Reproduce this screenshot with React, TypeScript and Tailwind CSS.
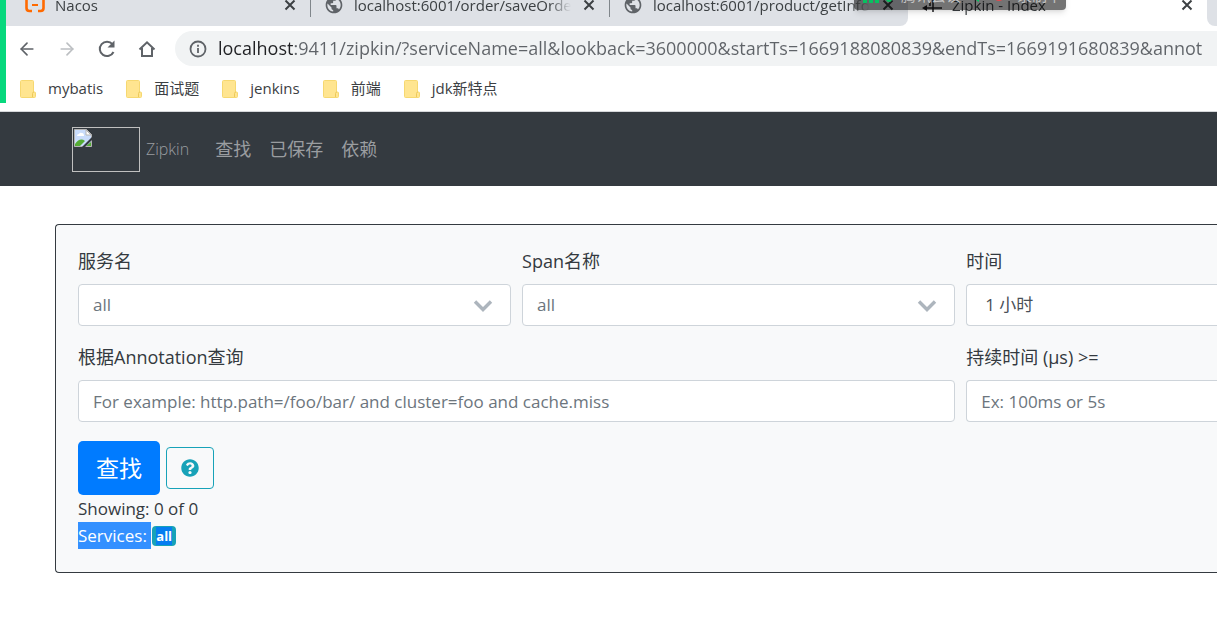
import React from 'react';
import { ArrowLeft, ArrowRight } from 'lucide-react';

interface TabProps {
  title: string;
  icon: React.ReactNode;
  className?: string;
}

const bookmarks = ['mybatis', '面试题', 'jenkins', '前端', 'jdk新特点'];

const navLinks = ['查找', '已保存', '依赖'];

const GlobeIcon = () => (
  <svg className="w-5 h-5 shrink-0" viewBox="0 0 24 24" fill="#5f6368">
    <path d="M12 2C6.48 2 2 6.48 2 12s4.48 10 10 10 10-4.48 10-10S17.52 2 12 2zm-1 17.93c-3.95-.49-7-3.85-7-7.93 0-.62.08-1.21.21-1.79L9 15v1c0 1.1.9 2 2 2v1.93zm6.9-2.54c-.26-.81-1-1.39-1.9-1.39h-1v-3c0-.55-.45-1-1-1H8v-2h2c.55 0 1-.45 1-1V7h2c1.1 0 2-.9 2-2v-.41c2.93 1.19 5 4.06 5 7.41 0 2.08-.8 3.97-2.1 5.39z" />
  </svg>
);

const NacosIcon = () => (
  <svg className="w-5 h-5 shrink-0" viewBox="0 0 20 20" fill="none" stroke="#ff6a00" strokeWidth="2.6">
    <path d="M7 2H4.500Q1.500 2 1.500 5v8q0 3 3 3H7M13 2h2.500q3 0 3 3v8q0 3-3 3H13" />
    <path d="M7 10h6" strokeWidth="2" />
  </svg>
);

const ZipkinIcon = () => (
  <svg className="w-5 h-5 shrink-0" viewBox="0 0 20 20" fill="none" stroke="#202124" strokeWidth="1.5">
    <path d="M11 1v16M4 13h16M8 7v4" />
    <path d="M0 13l5-3v6z" fill="#202124" stroke="none" />
  </svg>
);

const CloseIcon = () => (
  <svg className="w-3 h-3" viewBox="0 0 12 12" fill="none" stroke="#3c4043" strokeWidth="2">
    <path d="M1.500 1.500l9 9M10.500 1.500l-9 9" />
  </svg>
);

const ReloadIcon = () => (
  <svg className="w-5 h-5" viewBox="0 0 20 20" fill="none" stroke="#5f6368" strokeWidth="2">
    <path d="M15.500 5.200A7.200 7.200 0 1 0 16.500 13" />
    <path d="M17.500 1.500v7h-7z" fill="#5f6368" stroke="none" />
  </svg>
);

const HomeIcon = () => (
  <svg className="w-5 h-5" viewBox="0 0 20 20" fill="none" stroke="#5f6368" strokeWidth="2">
    <path d="M2.500 10.500L10 3.300l7.500 7.200M5 9v8h10V9" />
  </svg>
);

const InfoIcon = () => (
  <svg className="w-[18px] h-[18px] shrink-0" viewBox="0 0 18 18" fill="none" stroke="#5f6368" strokeWidth="1.8">
    <circle cx="9" cy="9" r="7.500" />
    <path d="M9 8v5M9 4.800v1.900" />
  </svg>
);

const FolderIcon = () => (
  <svg className="w-4 h-[18px] shrink-0" viewBox="0 0 16 18">
    <path d="M1.500.500h11q1 0 1 1v10.500h1q1 0 1 1v3.500q0 1-1 1h-13q-1 0-1-1v-15q0-1 1-1z" fill="#ffe590" stroke="#f6d871" />
    <path d="M12.500 17v-3.500q0-1.500 1.500-1.500" fill="none" stroke="#edc95a" />
  </svg>
);

const BrokenImageIcon = () => (
  <svg className="w-[18px] h-[18px]" viewBox="0 0 18 18">
    <path d="M.500.500h12l5 5v12H.500z" fill="#c9dcfb" stroke="#b4b4b4" />
    <path d="M3 7q0-2 2-2 1-2 3-1 2 0 2 3z" fill="#fff" />
    <path d="M1 17v-2q5-7 10-3l-5 5z" fill="#55ab35" />
    <path d="M12 17l5-4v4z" fill="#55ab35" />
    <path d="M12 1v5h5z" fill="#fff" stroke="#b4b4b4" />
    <path d="M8 18L18 8v3l-7 7z" fill="#343a40" />
  </svg>
);

const SelectArrow = () => (
  <svg className="absolute right-[18px] top-4 w-5 h-3 pointer-events-none" viewBox="0 0 20 12" fill="none" stroke="#adb5bd" strokeWidth="3.400">
    <path d="M2 1.500l8 8 8-8" />
  </svg>
);

const Tab: React.FC<TabProps> = ({ title, icon, className = 'bg-[#dee1e6]' }) => (
  <div className={`flex items-center h-[42px] w-[299px] shrink-0 px-[14px] ${className}`}>
    {icon}
    <span className="flex-1 ml-[10px] overflow-hidden whitespace-nowrap text-[15px] text-[#3c4043] mask-r-from-90%">
      {title}
    </span>
    <button type="button" aria-label="Close tab" className="ml-3">
      <CloseIcon />
    </button>
  </div>
);

const MeetingOverlay = () => (
  <div className="absolute left-[854px] -top-5 h-[30px] w-[212px] flex items-center rounded-b bg-black/55 px-[9px] text-[15px] text-[#c4c4c4] shadow-md whitespace-nowrap">
    <svg className="w-[30px] h-4 shrink-0" viewBox="0 0 30 16" fill="#07c160">
      <path d="M0 10h4v6H0zM6 6h4v10H6zM12 2h4v14h-4z" />
      <circle cx="26" cy="12" r="3" />
    </svg>
    <span className="ml-2">腾讯会议</span>
    <svg className="w-3 h-4 ml-2 shrink-0" viewBox="0 0 12 16" fill="#07c160">
      <path d="M0 8l10-7v14z" />
    </svg>
    <svg className="w-3 h-3 mx-3 shrink-0" viewBox="0 0 12 12" fill="none" stroke="#e5484d" strokeWidth="2">
      <circle cx="6" cy="6" r="5" />
    </svg>
    <span>录制中</span>
  </div>
);

const BrowserChrome = () => (
  <div className="flex border-b border-[#d5d7da]">
    <div className="w-1.5 mb-2 shrink-0 bg-[#07d87d]" />
    <div className="flex-1 min-w-0">
      <div className="flex items-end h-[26px] overflow-hidden">
        <div className="w-[5px] h-full shrink-0 bg-[#dee1e6]" />
        <Tab title="Nacos" icon={<NacosIcon />} />
        <Tab
          title="localhost:6001/order/saveOrder"
          icon={<GlobeIcon />}
          className="bg-[#dee1e6] bg-[linear-gradient(#80868b,#80868b)] bg-no-repeat bg-size-[1px_33px]"
        />
        <Tab
          title="localhost:6001/product/getInfo"
          icon={<GlobeIcon />}
          className="bg-[#dee1e6] bg-[linear-gradient(#80868b,#80868b)] bg-no-repeat bg-size-[1px_33px] rounded-br-lg"
        />
        <Tab title="Zipkin - Index" icon={<ZipkinIcon />} className="bg-white" />
        <div className="flex-1 h-full bg-[#dee1e6] rounded-bl-lg" />
      </div>

      <div className="flex items-center pt-[5px] pl-[11px]">
        <button type="button" aria-label="Back">
          <ArrowLeft className="w-5 h-5 text-[#5f6368]" />
        </button>
        <button type="button" aria-label="Forward" className="ml-5">
          <ArrowRight className="w-5 h-5 text-[#bcbfc2]" />
        </button>
        <button type="button" aria-label="Reload" className="ml-5">
          <ReloadIcon />
        </button>
        <button type="button" aria-label="Home" className="ml-5">
          <HomeIcon />
        </button>
        <div className="flex flex-1 items-center h-[35px] ml-[18px] pl-[14px] rounded-l-full bg-[#f1f3f4]">
          <InfoIcon />
          <input
            type="text"
            aria-label="Address"
            defaultValue="localhost:9411/zipkin/?serviceName=all&lookback=3600000&startTs=1669188080839&endTs=1669191680839&annot"
            className="flex-1 min-w-0 ml-[11px] text-[18px] text-transparent bg-clip-text bg-[linear-gradient(90deg,#202124_77px,#5f6368_77px)] outline-none"
          />
        </div>
      </div>

      <div className="flex items-center h-[45px] gap-[23px] pl-[14px] text-[15px] text-[#3c4043]">
        {bookmarks.map(name => (
          <a key={name} href="#" className="flex items-center gap-3 whitespace-nowrap">
            <FolderIcon />
            {name}
          </a>
        ))}
      </div>
    </div>
  </div>
);

const Navbar = () => (
  <nav className="flex items-center h-[74px] pl-[72px] bg-[#343a40] text-[#9a9da0]">
    <a href="#" className="flex items-center gap-1.5">
      <div className="w-[68px] h-[45px] p-px border border-[#c0c0c0]">
        <BrokenImageIcon />
      </div>
      <span className="text-base font-light">Zipkin</span>
    </a>
    <div className="flex gap-[18px] ml-[26px] text-lg">
      {navLinks.map(link => (
        <a key={link} href="#">{link}</a>
      ))}
    </div>
  </nav>
);

const labelClass = 'block mb-[9px] text-lg leading-[27px]';
const controlClass =
  'block w-full h-[42px] px-[14px] appearance-none bg-white border border-[#ced4da] rounded text-[17px] text-[#6c757d] placeholder:text-[#6c757d] outline-none';

const SearchForm = () => (
  <form
    onSubmit={e => e.preventDefault()}
    className="ml-[55px] mt-[38px] py-[23px] pl-[22px] border border-r-0 border-[#343a40] rounded-l bg-[#f8f9fa] text-[#343a40]"
  >
    <div className="grid grid-cols-[19fr_19fr_11fr] gap-x-[11px] gap-y-[18px]">
      <div>
        <label htmlFor="serviceName" className={labelClass}>服务名</label>
        <div className="relative">
          <select id="serviceName" className={controlClass}>
            <option>all</option>
          </select>
          <SelectArrow />
        </div>
      </div>
      <div>
        <label htmlFor="spanName" className={labelClass}>Span名称</label>
        <div className="relative">
          <select id="spanName" className={controlClass}>
            <option>all</option>
          </select>
          <SelectArrow />
        </div>
      </div>
      <div>
        <label htmlFor="lookback" className={labelClass}>时间</label>
        <select
          id="lookback"
          className="block w-full h-[42px] px-[18px] appearance-none bg-white border border-r-0 border-[#ced4da] rounded-l text-[17px] text-[#495057] outline-none"
        >
          <option>1 小时</option>
        </select>
      </div>

      <div className="col-span-2">
        <label htmlFor="annotationQuery" className={labelClass}>根据Annotation查询</label>
        <input
          id="annotationQuery"
          type="text"
          placeholder="For example: http.path=/foo/bar/ and cluster=foo and cache.miss"
          className={controlClass}
        />
      </div>
      <div>
        <label htmlFor="minDuration" className={labelClass}>持续时间 (μs) &gt;=</label>
        <input
          id="minDuration"
          type="text"
          placeholder="Ex: 100ms or 5s"
          className="block w-full h-[42px] px-[14px] bg-white border border-r-0 border-[#ced4da] rounded-l text-[17px] placeholder:text-[#6c757d] outline-none"
        />
      </div>
    </div>

    <div className="flex items-center gap-1.5 mt-[19px]">
      <button type="submit" className="h-[54px] px-[18px] rounded-[5px] bg-[#007bff] text-[23px] text-white">
        查找
      </button>
      <button
        type="button"
        aria-label="Help"
        className="flex items-center justify-center w-12 h-[42px] border border-[#17a2b8] rounded"
      >
        <svg className="w-[18px] h-[18px]" viewBox="0 0 512 512" fill="#17a2b8">
          <path d="M504 256c0 136.997-111.043 248-248 248S8 392.997 8 256C8 119.083 119.043 8 256 8s248 111.083 248 248zM262.655 90c-54.497 0-89.255 22.957-116.549 63.758-3.536 5.286-2.353 12.415 2.715 16.258l34.699 26.310c5.205 3.947 12.621 3.008 16.665-2.122 17.864-22.658 30.113-35.797 57.303-35.797 20.429 0 45.698 13.148 45.698 32.958 0 14.976-12.363 22.667-32.534 33.976C247.128 238.528 216 254.941 216 296v4c0 6.627 5.373 12 12 12h56c6.627 0 12-5.373 12-12v-1.333c0-28.462 83.186-29.647 83.186-106.667 0-58.002-60.165-102-116.531-102zM256 338c-25.365 0-46 20.635-46 46 0 25.364 20.635 46 46 46s46-20.636 46-46c0-25.365-20.635-46-46-46z" />
        </svg>
      </button>
    </div>

    <div className="text-[17px] leading-[27px]">Showing: 0 of 0</div>
    <div className="flex items-center text-[17px] leading-[27px]">
      <span className="bg-[#3390ff] text-white whitespace-pre">Services: </span>
      <span className="px-1 h-5 ml-px rounded bg-[#17a2b8] text-[13px] leading-5 font-bold text-white">
        <span className="bg-[#067df0]">all</span>
      </span>
    </div>
  </form>
);

const App = () => (
  <div className="relative min-h-screen overflow-hidden bg-white font-['Open_Sans','Noto_Sans_CJK_SC',sans-serif]">
    <BrowserChrome />
    <MeetingOverlay />
    <Navbar />
    <SearchForm />
  </div>
);

export default App;
